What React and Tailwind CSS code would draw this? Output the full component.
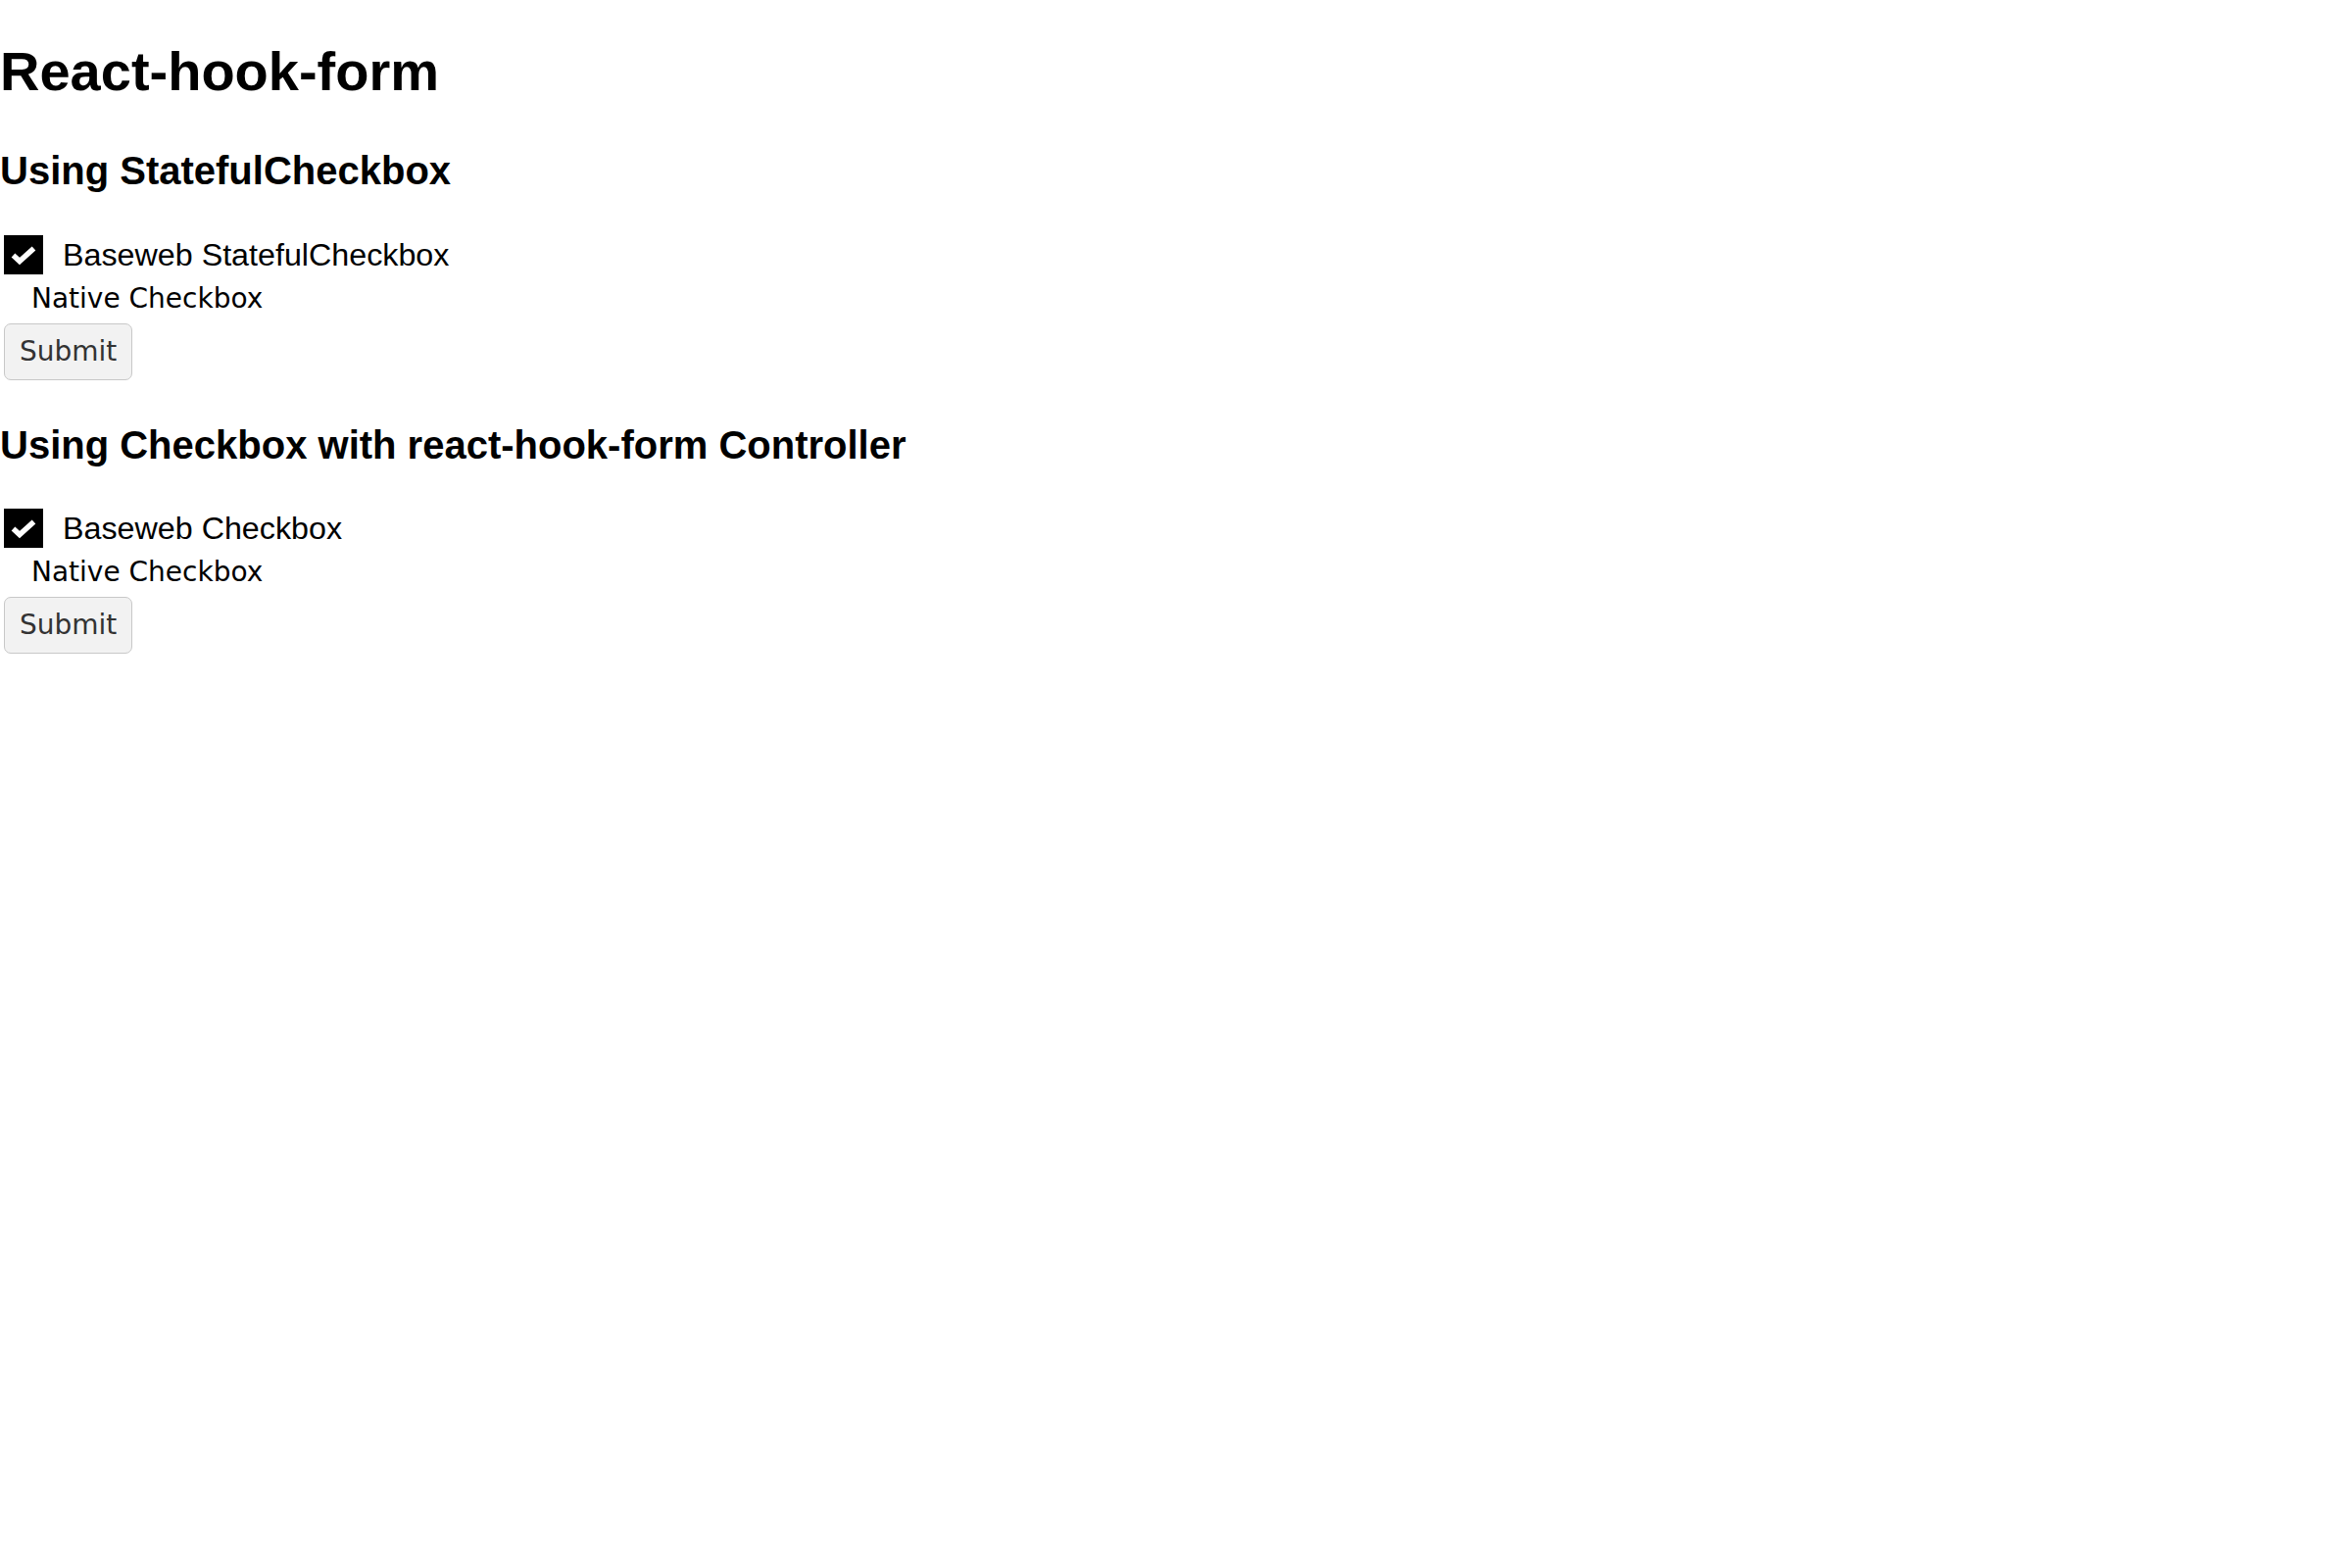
import React, { useState } from "react";

function BaseCheckbox({ label }) {
    const [checked, setChecked] = useState(true);
    return (
        <label className="flex items-center h-[40px] cursor-pointer" onClick={() => setChecked((c) => !c)}>
            <span className="ml-[4px] w-[40px] h-[40px] flex items-center justify-center bg-black">
                {checked && (
                    <svg width="40" height="40" viewBox="0 0 40 40">
                        <polyline
                            points="9.5,20.5 16,26.5 30.5,13.5"
                            fill="none"
                            stroke="white"
                            strokeWidth="5.5"
                            strokeLinejoin="miter"
                        />
                    </svg>
                )}
            </span>
            <span className="ml-[20px] text-[32.25px] leading-[34px]">{label}</span>
        </label>
    );
}

function Section({ title, label, first }) {
    return (
        <form onSubmit={(e) => e.preventDefault()}>
            <h2 className={`${first ? "mt-[49px]" : "mt-[45px]"} text-[40px] leading-[42px] font-bold`}>{title}</h2>
            <div className={first ? "mt-[45px]" : "mt-[44px]"}>
                <BaseCheckbox label={label} />
            </div>
            <label className="mt-[8px] ml-[32px] block text-[28px] leading-[34px] font-['DejaVu_Sans',sans-serif]">
                Native Checkbox
            </label>
            <button
                type="submit"
                className="mt-[8px] ml-[4px] h-[58px] px-[15px] text-[28px] leading-[34px] text-[#333333] bg-[#f2f2f2] border-[1.5px] border-[#c8c8c8] rounded-[7px] font-['DejaVu_Sans',sans-serif]"
            >
                Submit
            </button>
        </form>
    );
}

export default function App() {
    return (
        <div className="min-h-[1600px] bg-white text-black font-['Liberation_Sans',Arial,sans-serif]">
            <h1 className="pt-[42px] text-[56px] leading-[62px] font-bold">React-hook-form</h1>
            <Section title="Using StatefulCheckbox" label="Baseweb StatefulCheckbox" first />
            <Section title="Using Checkbox with react-hook-form Controller" label="Baseweb Checkbox" />
        </div>
    );
}
